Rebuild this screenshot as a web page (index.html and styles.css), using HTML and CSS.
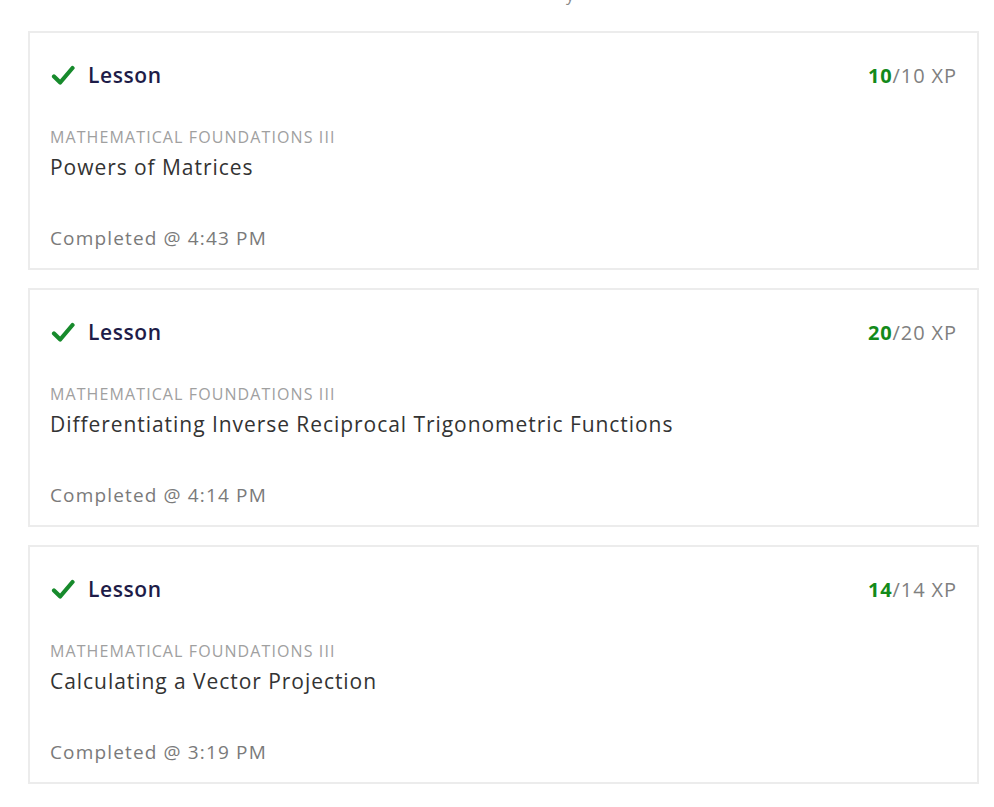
FILE: index.html
```html
<!DOCTYPE html>
<html>
<head>
<meta charset="utf-8">
<link rel="stylesheet" href="styles.css">
</head>
<body>
<div class="top"><span class="top-mark">y</span></div>
<div class="list">
  <div class="card">
    <div class="head">
      <div class="kind">
        <svg class="check" viewBox="0 0 24 24" width="24" height="24"><path d="M3 13.5 L9.2 19.5 L21.5 5" fill="none" stroke="#178a2c" stroke-width="4.2" stroke-linecap="round" stroke-linejoin="round"/></svg>
        <span class="kind-label">Lesson</span>
      </div>
      <div class="xp"><b>10</b>/10 XP</div>
    </div>
    <div class="course">MATHEMATICAL FOUNDATIONS III</div>
    <div class="title">Powers of Matrices</div>
    <div class="done">Completed @ 4:43 PM</div>
  </div>
  <div class="card">
    <div class="head">
      <div class="kind">
        <svg class="check" viewBox="0 0 24 24" width="24" height="24"><path d="M3 13.5 L9.2 19.5 L21.5 5" fill="none" stroke="#178a2c" stroke-width="4.2" stroke-linecap="round" stroke-linejoin="round"/></svg>
        <span class="kind-label">Lesson</span>
      </div>
      <div class="xp"><b>20</b>/20 XP</div>
    </div>
    <div class="course">MATHEMATICAL FOUNDATIONS III</div>
    <div class="title">Differentiating Inverse Reciprocal Trigonometric Functions</div>
    <div class="done">Completed @ 4:14 PM</div>
  </div>
  <div class="card">
    <div class="head">
      <div class="kind">
        <svg class="check" viewBox="0 0 24 24" width="24" height="24"><path d="M3 13.5 L9.2 19.5 L21.5 5" fill="none" stroke="#178a2c" stroke-width="4.2" stroke-linecap="round" stroke-linejoin="round"/></svg>
        <span class="kind-label">Lesson</span>
      </div>
      <div class="xp"><b>14</b>/14 XP</div>
    </div>
    <div class="course">MATHEMATICAL FOUNDATIONS III</div>
    <div class="title">Calculating a Vector Projection</div>
    <div class="done">Completed @ 3:19 PM</div>
  </div>
</div>
</body>
</html>
```
FILE: styles.css
```css
html, body {
  margin: 0;
  padding: 0;
  background: #ffffff;
  font-family: "Open Sans", "Noto Sans", sans-serif;
}
.top {
  height: 31px;
  position: relative;
  overflow: hidden;
}
.top-mark {
  position: absolute;
  left: 566px;
  top: -16px;
  font-size: 16px;
  color: #888;
}
.list {
  display: flex;
  flex-direction: column;
  gap: 18px;
  padding-left: 28px;
  width: 951px;
}
.card {
  border: 2px solid #ececec;
  padding: 20px 20px 17px 20px;
  display: flex;
  flex-direction: column;
}
.head {
  height: 44px;
  display: flex;
  align-items: center;
  justify-content: space-between;
}
.kind {
  display: flex;
  align-items: center;
  gap: 13px;
}
.check {
  display: block;
  margin-left: 1px;
}
.kind-label {
  font-size: 21px;
  font-weight: 600;
  letter-spacing: 0.6px;
  color: #1e1c48;
}
.xp {
  font-size: 20px;
  letter-spacing: 0.9px;
  color: #808080;
}
.xp b {
  font-weight: 700;
  color: #138a1a;
}
.course {
  margin-top: 30px;
  font-size: 16px;
  line-height: 20px;
  letter-spacing: 1.1px;
  color: #a0a0a0;
}
.title {
  margin-top: 7px;
  font-size: 21px;
  line-height: 26px;
  letter-spacing: 0.95px;
  color: #333333;
}
.done {
  margin-top: 45px;
  font-size: 19px;
  line-height: 26px;
  letter-spacing: 1.15px;
  color: #7a7a7a;
}
```
